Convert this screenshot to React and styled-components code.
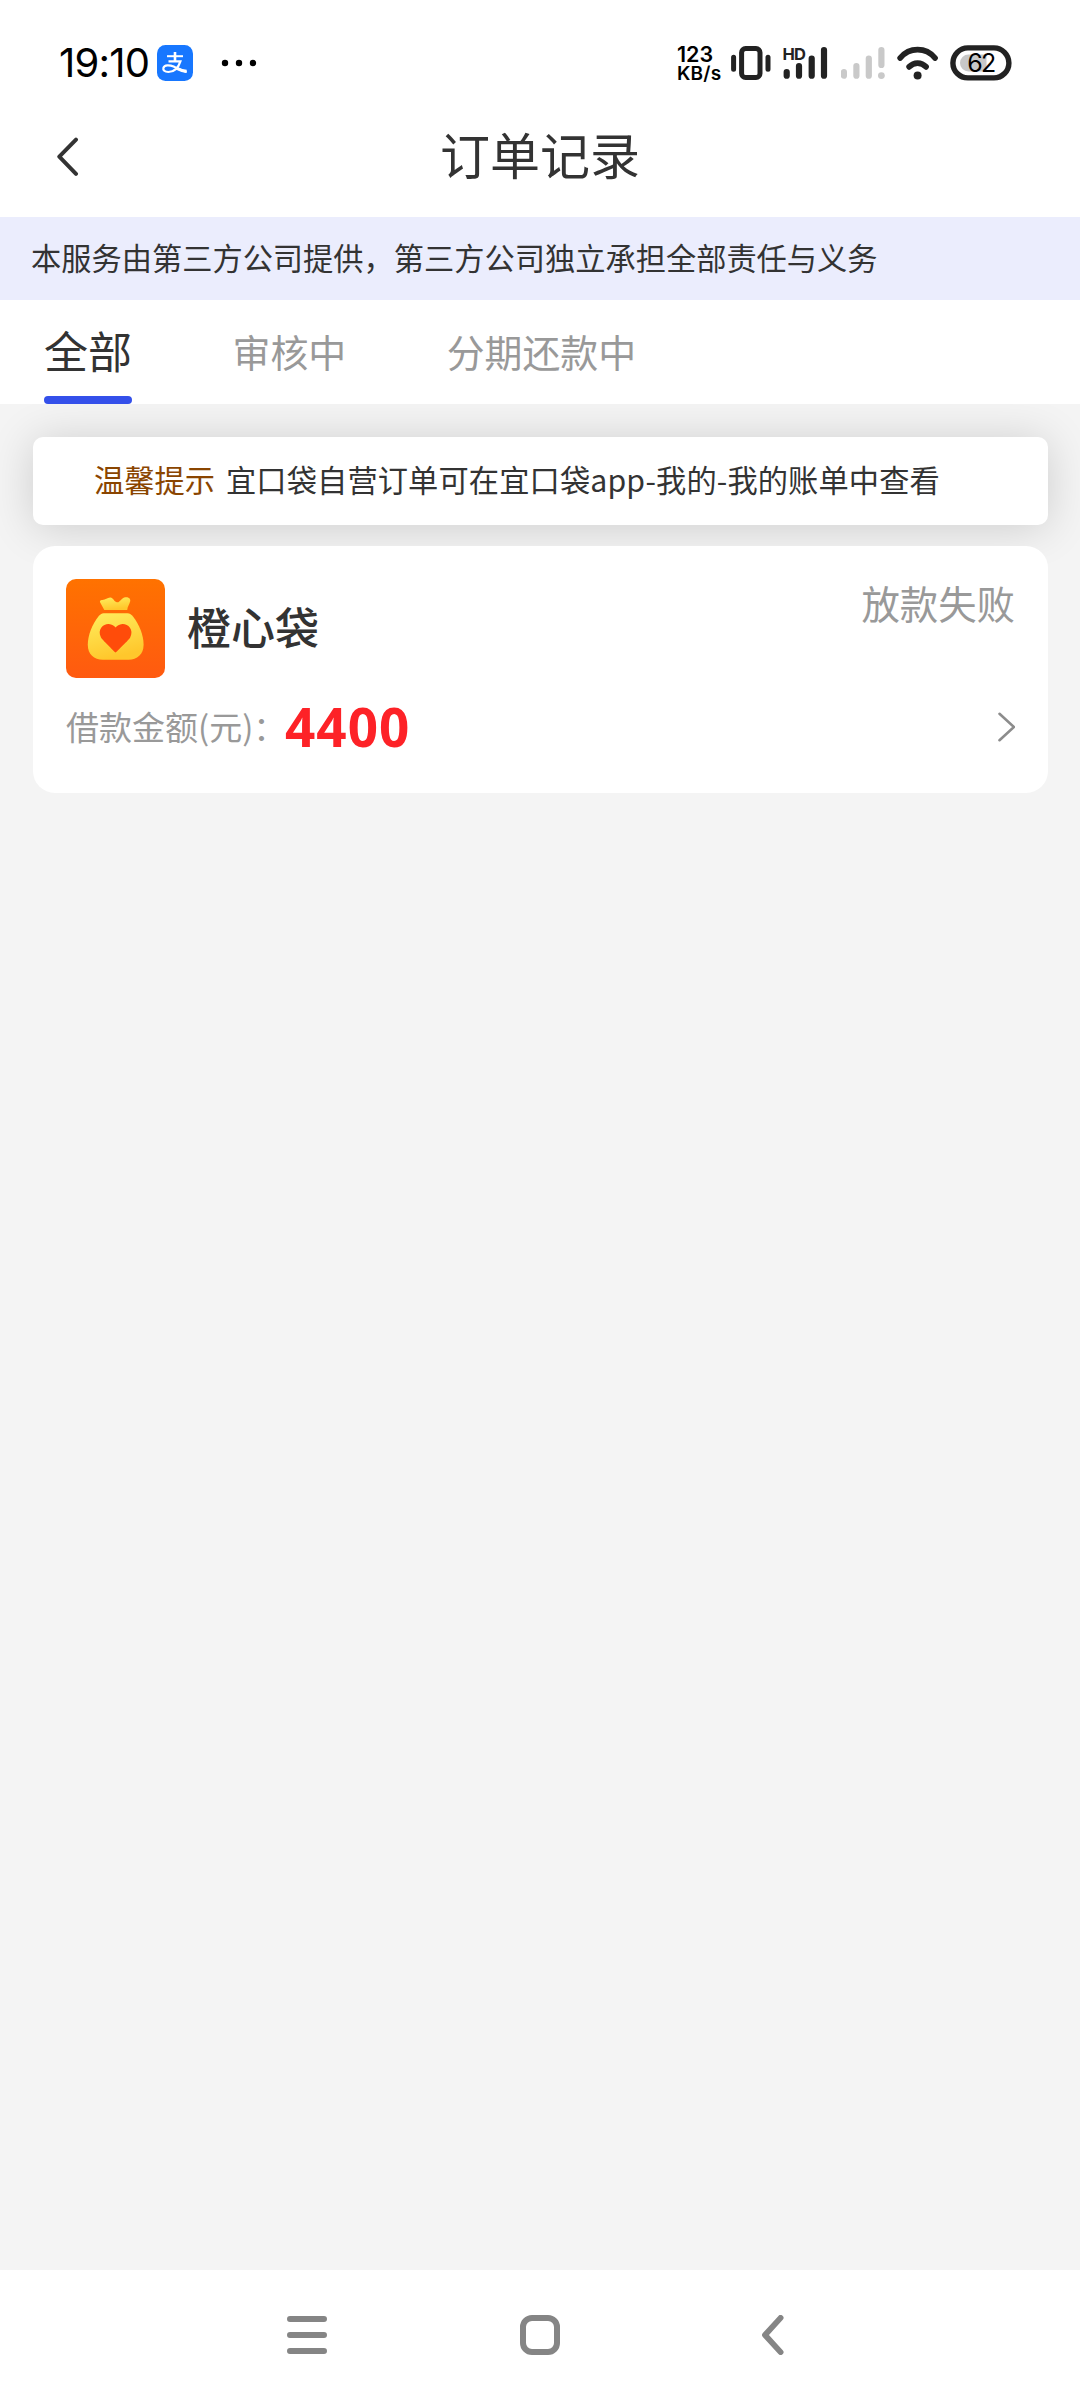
import React, {useState} from 'react';
import styled, {createGlobalStyle} from 'styled-components';

const GlobalStyle = createGlobalStyle`
  * {
    box-sizing: border-box;
  }

  body {
    margin: 0;
    background-color: #f4f4f4;
    font-family: 'Noto Sans CJK SC', sans-serif;
    color: #333;
  }

  button {
    padding: 0;
    border: 0;
    background: none;
    font: inherit;
    color: inherit;
  }

  svg {
    display: block;
    flex: none;
  }
`;

const Screen = styled.div`
  width: 1080px;
  height: 2400px;
  display: flex;
  flex-direction: column;
`;

const StatusBar = styled.div`
  height: 105px;
  padding: 20px 68px 0 59px;
  display: flex;
  align-items: center;
  background-color: #fff;
  font-family: Inter, sans-serif;
  color: #000;
`;

const Clock = styled.div`
  width: 98px;
  font-size: 40px;
  font-weight: 400;
  line-height: 44px;
  letter-spacing: -0.8px;
  white-space: nowrap;
`;

const MoreDots = styled.svg`
  margin-left: 28px;
`;

const StatusIcons = styled.div`
  display: flex;
  align-items: center;
  margin-left: auto;
`;

const Speed = styled.div`
  width: 54px;
  display: flex;
  flex-direction: column;
  gap: 1px;
  padding-top: 2px;
  font-weight: 600;
  white-space: nowrap;
`;

const SpeedValue = styled.span`
  font-size: 21.5px;
  line-height: 18px;
`;

const SpeedUnit = styled.span`
  font-size: 19px;
  line-height: 19px;
  letter-spacing: 0.2px;
`;

const Header = styled.header`
  height: 112px;
  padding: 0 57px 8px;
  display: grid;
  grid-template-columns: 24px 1fr 24px;
  align-items: center;
  background-color: #fff;
`;

const Title = styled.h1`
  margin: 0 0 9px;
  font-size: 50px;
  font-weight: 400;
  line-height: 60px;
  text-align: center;
`;

const Notice = styled.div`
  height: 83px;
  padding: 0 31px;
  background-color: #ebedfd;
  font-size: 30.24px;
  line-height: 80px;
  white-space: nowrap;
`;

const Tabs = styled.nav`
  height: 104px;
  padding-left: 44px;
  display: flex;
  gap: 100.5px;
  background-color: #fff;
`;

const Tab = styled.button`
  height: 104px;
  display: flex;
  flex-direction: column;
  justify-content: space-between;
  padding-top: ${(props) => (props.$active ? '20px' : '21px')};
  font-size: ${(props) => (props.$active ? '44px' : '37.9px')};
  line-height: 60px;
  color: ${(props) => (props.$active ? '#333' : '#999')};
  white-space: nowrap;

  &::after {
    content: '';
    width: 100%;
    height: 8px;
    border-radius: 4px;
    background-color: ${(props) => (props.$active ? '#3450ea' : 'transparent')};
  }
`;

const Content = styled.main`
  flex: 1;
  display: flex;
  flex-direction: column;
  gap: 21px;
  padding: 33px 32px 0 33px;
  overflow: hidden;
`;

const Tip = styled.div`
  height: 88px;
  padding-left: 61px;
  display: flex;
  gap: 11px;
  border-radius: 10px;
  background-color: #fff;
  box-shadow: 0 3px 45px rgba(0, 0, 0, 0.16);
  font-size: 30.24px;
  line-height: 85px;
  white-space: nowrap;
`;

const TipLabel = styled.span`
  color: #8a4500;
`;

const TipText = styled.span`
  letter-spacing: 0.13px;
`;

const OrderCard = styled.section`
  position: relative;
  height: 247px;
  padding: 33px 33px 0;
  border-radius: 22px;
  background-color: #fff;
`;

const OrderTop = styled.div`
  display: flex;
  height: 99px;
`;

const OrderName = styled.h2`
  margin: 0 0 0 22px;
  font-size: 44px;
  font-weight: 500;
  line-height: 95px;
`;

const OrderStatus = styled.span`
  margin-left: auto;
  font-size: 38.4px;
  line-height: 47px;
  color: #999;
`;

const OrderBottom = styled.div`
  display: flex;
  align-items: center;
  height: 98px;
`;

const AmountLabel = styled.span`
  width: 219px;
  margin-bottom: 3px;
  font-size: 33px;
  line-height: 48px;
  color: #999;
  white-space: nowrap;
`;

const Amount = styled.span`
  font-family: 'Noto Sans', sans-serif;
  font-size: 53px;
  font-weight: 700;
  line-height: 60px;
  letter-spacing: 1px;
  color: #fd2227;
`;

const Arrow = styled.svg`
  margin-left: auto;
`;

const NavBar = styled.footer`
  height: 130px;
  padding: 0 287px;
  display: flex;
  align-items: center;
  justify-content: space-between;
  background-color: #fff;
`;

function AlipayIcon() {
  return (
    <svg width="36" height="36" viewBox="0 0 36 36">
      <rect width="36" height="36" rx="8.5" fill="#1777ff" />
      <g fill="none" stroke="#fff" strokeLinecap="butt">
        <path d="M10 11.2H26" strokeWidth="2" />
        <path d="M18 7V16.5" strokeWidth="2.6" />
        <path d="M11.5 16.4H23.4C22 20.8 18.6 27 11.4 27C7.6 27 5.8 25.2 6.4 22.8C7.4 19.6 12.6 19.8 16.6 21.6C20 23.2 24 25.6 29.6 27" strokeWidth="2.2" />
        <path d="M20.5 23.6C23 24.9 26 26 29.6 26.4" strokeWidth="3.2" />
      </g>
    </svg>
  );
}

function VibrateIcon() {
  return (
    <svg width="52" height="36" viewBox="0 0 52 36" fill="none" stroke="#222">
      <rect x="10.6" y="3.5" width="18.4" height="29" rx="4" strokeWidth="5" />
      <path d="M2.6 12.3V24.3M37 12.3V24.3" strokeWidth="5" strokeLinecap="round" />
    </svg>
  );
}

function SignalIcon() {
  return (
    <svg width="58" height="36" viewBox="0 0 58 36">
      <path d="M3.7 27V30.7M16 21V30.7M28.7 13.5V30.7M41 5V30.7" stroke="#222" strokeWidth="6.2" strokeLinecap="round" />
      <text x="-0.5" y="14.6" fontFamily="Inter, sans-serif" fontSize="16.5" fontWeight="700" letterSpacing="-0.9" fill="#222">HD</text>
    </svg>
  );
}

function NoSignalIcon() {
  return (
    <svg width="56" height="36" viewBox="0 0 56 36">
      <path d="M2.9 27V30.7M15.4 21V30.7M27.8 13.5V30.7M40.4 5V20" stroke="#c9c9c9" strokeWidth="6.2" strokeLinecap="round" />
      <circle cx="40.4" cy="30.6" r="3.4" fill="#c9c9c9" />
    </svg>
  );
}

function WifiIcon() {
  return (
    <svg width="53" height="36" viewBox="0 0 53 36">
      <path d="M3.2 13C12.4 1.9 28.8 1.9 38 13M12.2 21.8C16.8 16.8 24.4 16.8 29 21.8" fill="none" stroke="#222" strokeWidth="5.8" strokeLinecap="round" />
      <circle cx="20.6" cy="30.6" r="4" fill="#222" />
    </svg>
  );
}

function BatteryIcon() {
  return (
    <svg width="62" height="36" viewBox="0 0 62 36">
      <rect x="2.9" y="2.9" width="56" height="30" rx="15" fill="#fff" stroke="#222" strokeWidth="5.4" />
      <path d="M18.5 9.5H36.5V26.5H18.5A8.5 8.5 0 0 1 18.5 9.5Z" fill="#c8c8c8" />
      <text x="31" y="27" textAnchor="middle" fontFamily="Inter, sans-serif" fontSize="25" fontWeight="400" letterSpacing="-1.6" fill="#000">62</text>
    </svg>
  );
}

function BackIcon() {
  return (
    <svg width="24" height="40" viewBox="0 0 24 40">
      <path d="M19 2.6L2.3 19.6L19 36.8" fill="none" stroke="#333" strokeWidth="4" strokeLinecap="round" strokeLinejoin="round" />
    </svg>
  );
}

function PouchLogo() {
  return (
    <svg width="99" height="99" viewBox="0 0 99 99">
      <defs>
        <linearGradient id="pouchBg" x1="0" y1="0" x2="0" y2="1">
          <stop offset="0" stopColor="#ff7200" />
          <stop offset="1" stopColor="#ff5a10" />
        </linearGradient>
        <linearGradient id="pouchBody" x1="0" y1="0" x2="0.3" y2="1">
          <stop offset="0" stopColor="#ffee5e" />
          <stop offset="1" stopColor="#ffc72c" />
        </linearGradient>
      </defs>
      <rect width="99" height="99" rx="10" fill="url(#pouchBg)" />
      <path d="M38.3 31L34.2 23.4C33.4 21.8 34.4 20.8 36.2 20.9C39.6 21 41.4 18.3 44.4 18.5C47.4 18.8 47.8 22.3 50.8 23.2C54 24 55.2 18.7 59.4 18.2C62.6 17.9 64.8 19.6 64.2 22.2C63.4 25.2 61.6 27.4 61.2 31Z" fill="url(#pouchBody)" />
      <path d="M37.8 34.3H61.4C64 34.3 65.4 35.6 67 37.6C73 45.4 77.6 56 77.6 65.8C77.6 75.4 71 80.8 62.6 80.8H36.8C28 80.8 21.8 75.4 21.8 65.8C21.8 56 26.4 45.4 32.4 37.6C34 35.6 35.4 34.3 37.8 34.3Z" fill="url(#pouchBody)" />
      <path d="M49.6 73.6C48.2 72 36 60.6 35 58.4C30.8 50 37.6 44.6 42.8 44.9C46 45.1 48.2 46.6 49.6 48.4C51 46.6 53.2 45.1 56.4 44.9C61.6 44.6 68.4 50 64.2 58.4C63.2 60.6 51 72 49.6 73.6Z" fill="#ff4c0a" />
    </svg>
  );
}

function MenuIcon() {
  return (
    <svg width="40" height="40" viewBox="0 0 40 40">
      <path d="M3 4H37M3 20H37M3 36H37" stroke="#858585" strokeWidth="6" strokeLinecap="round" />
    </svg>
  );
}

function HomeIcon() {
  return (
    <svg width="40" height="40" viewBox="0 0 40 40">
      <rect x="3" y="3" width="34" height="34" rx="9" fill="none" stroke="#858585" strokeWidth="6" />
    </svg>
  );
}

function NavBackIcon() {
  return (
    <svg width="40" height="40" viewBox="0 0 40 40">
      <path d="M27.6 2.9L12 20L27.6 37.1" fill="none" stroke="#858585" strokeWidth="5.8" strokeLinecap="round" strokeLinejoin="round" />
    </svg>
  );
}

const tabs = ['全部', '审核中', '分期还款中'];

const orders = [
  {name: '橙心袋', status: '放款失败', amount: 4400},
];

function Order(props) {
  const {name, status, amount} = props;

  return (
    <OrderCard>
      <OrderTop>
        <PouchLogo />
        <OrderName>{name}</OrderName>
        <OrderStatus>{status}</OrderStatus>
      </OrderTop>
      <OrderBottom>
        <AmountLabel>借款金额(元)：</AmountLabel>
        <Amount>{amount}</Amount>
        <Arrow width="18" height="30" viewBox="0 0 18 30">
          <path d="M2.5 1.8L17 15L2.5 28.2" fill="none" stroke="#8c8c8c" strokeWidth="2.6" strokeLinecap="round" />
        </Arrow>
      </OrderBottom>
    </OrderCard>
  );
}

function App() {
  const [active, setActive] = useState(0);

  return (
    <Screen>
      <GlobalStyle />
      <StatusBar>
        <Clock>19:10</Clock>
        <AlipayIcon />
        <MoreDots width="36" height="8" viewBox="0 0 36 8">
          <circle cx="4" cy="4" r="3.2" />
          <circle cx="18" cy="4" r="3.2" />
          <circle cx="32" cy="4" r="3.2" />
        </MoreDots>
        <StatusIcons>
          <Speed>
            <SpeedValue>123</SpeedValue>
            <SpeedUnit>KB/s</SpeedUnit>
          </Speed>
          <VibrateIcon />
          <SignalIcon />
          <NoSignalIcon />
          <WifiIcon />
          <BatteryIcon />
        </StatusIcons>
      </StatusBar>
      <Header>
        <BackIcon />
        <Title>订单记录</Title>
      </Header>
      <Notice>本服务由第三方公司提供，第三方公司独立承担全部责任与义务</Notice>
      <Tabs>
        {
          tabs.map((tab, index) => (
            <Tab key={tab} $active={index === active} onClick={() => setActive(index)}>
              {tab}
            </Tab>
          ))
        }
      </Tabs>
      <Content>
        <Tip>
          <TipLabel>温馨提示</TipLabel>
          <TipText>宜口袋自营订单可在宜口袋app-我的-我的账单中查看</TipText>
        </Tip>
        {
          orders.map((order) => <Order key={order.name} {...order} />)
        }
      </Content>
      <NavBar>
        <MenuIcon />
        <HomeIcon />
        <NavBackIcon />
      </NavBar>
    </Screen>
  );
}

export default App;
